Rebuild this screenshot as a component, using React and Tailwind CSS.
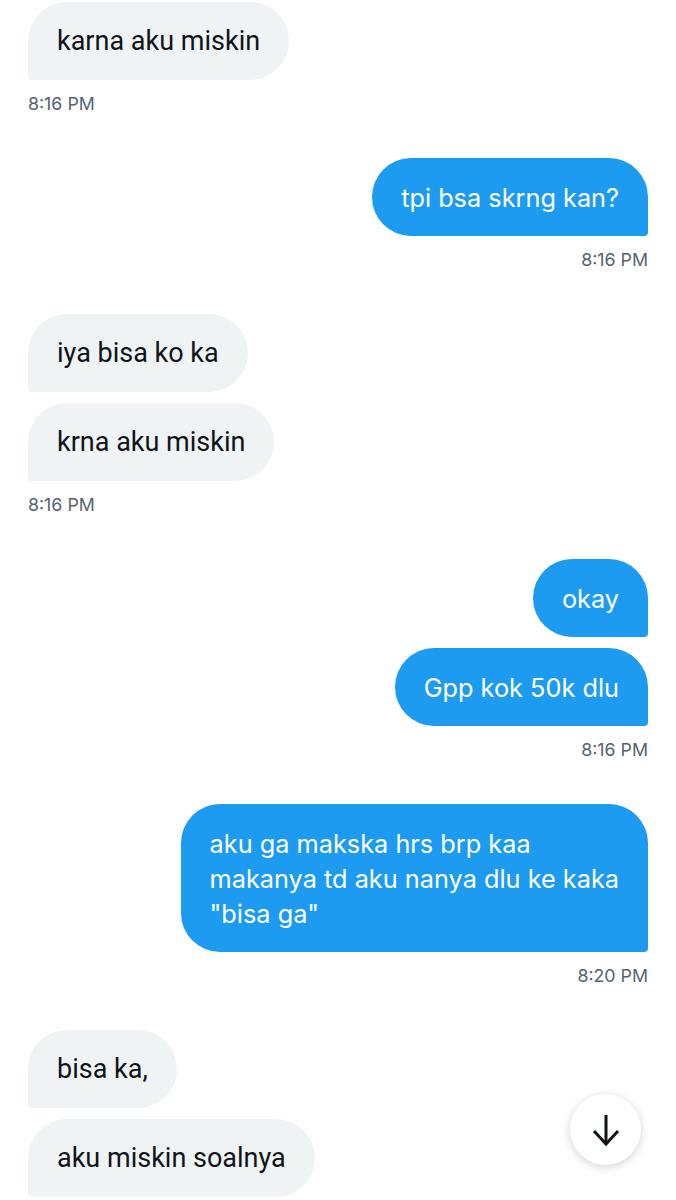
const groups = [
  { side: 'left', msgs: [['karna aku miskin']], time: '8:16 PM' },
  { side: 'right', msgs: [['tpi bsa skrng kan?']], time: '8:16 PM' },
  { side: 'left', msgs: [['iya bisa ko ka'], ['krna aku miskin']], time: '8:16 PM' },
  { side: 'right', msgs: [['okay'], ['Gpp kok 50k dlu']], time: '8:16 PM' },
  {
    side: 'right',
    msgs: [['aku ga makska hrs brp kaa', 'makanya td aku nanya dlu ke kaka', '"bisa ga"']],
    time: '8:20 PM',
  },
  { side: 'left', msgs: [['bisa ka,'], ['aku miskin soalnya']] },
];

function Bubble({ side, lines }) {
  const mine = side === 'right';
  return (
    <div
      className={`px-[29px] py-[21.5px] leading-[35px] rounded-[39px] ${
        mine
          ? 'bg-[#1d9bf0] text-white text-[25.3px] rounded-br-[4px] font-["Inter",sans-serif]'
          : 'bg-[#eff3f4] text-[#0f1419] text-[27px] rounded-bl-[4px] font-["Roboto",sans-serif]'
      }`}
    >
      {lines.map((l, i) => (
        <div key={i} className="whitespace-nowrap">{l}</div>
      ))}
    </div>
  );
}

export default function App() {
  return (
    <div className="relative min-h-[1200px] bg-white px-7 pt-[2px] overflow-hidden">
      <div className="flex flex-col gap-[43px]">
        {groups.map((g, gi) => (
          <div
            key={gi}
            className={`flex flex-col ${g.side === 'right' ? 'items-end' : 'items-start'}`}
          >
            <div className={`flex flex-col gap-[11px] ${g.side === 'right' ? 'items-end' : 'items-start'}`}>
              {g.msgs.map((m, mi) => (
                <Bubble key={mi} side={g.side} lines={m} />
              ))}
            </div>
            {g.time && (
              <div className="mt-[13px] text-[17.8px] leading-[22px] text-[#536471] font-['Inter',sans-serif]">
                {g.time}
              </div>
            )}
          </div>
        ))}
      </div>

      {/* scroll to bottom */}
      <button className="absolute right-[35px] bottom-[35px] w-[71px] h-[71px] rounded-full bg-white shadow-[0_2px_10px_rgba(0,0,0,0.18)] flex items-center justify-center">
        <svg width="40" height="40" viewBox="0 0 40 40" fill="none" stroke="#0f1419" strokeWidth="3" strokeLinecap="butt" strokeLinejoin="miter">
          <path d="M20 5v29" />
          <path d="M8 21l12 13 12-13" />
        </svg>
      </button>
    </div>
  );
}
